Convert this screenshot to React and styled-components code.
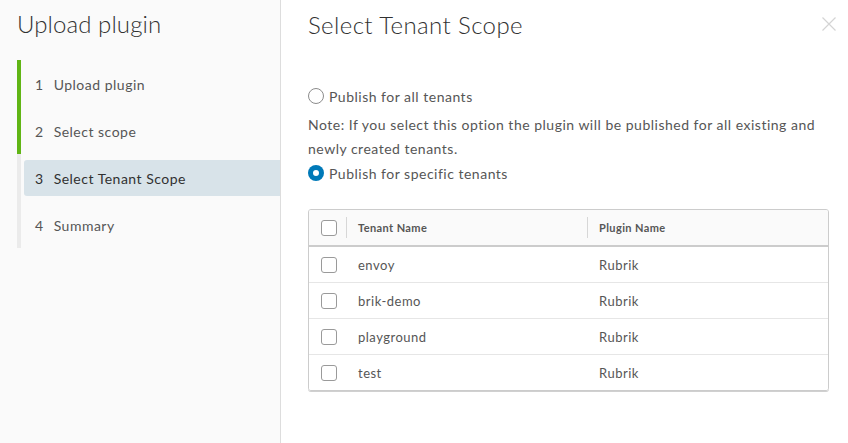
import React from 'react'
import styled, { createGlobalStyle } from 'styled-components'

const GlobalStyle = createGlobalStyle`
  html, body, #root {
    margin: 0;
    padding: 0;
    height: 100%;
  }
  body {
    background: #fff;
    font-family: 'Lato', 'Open Sans', sans-serif;
    color: #565656;
  }
  * { box-sizing: border-box; }
`

const Wizard = styled.div`
  display: flex;
  height: 443px;
  width: 848px;
  overflow: hidden;
`

const Sidebar = styled.aside`
  width: 281px;
  flex-shrink: 0;
  background: #fafafa;
  border-right: 1px solid #dddddd;
  padding-left: 17px;
`

const SideTitle = styled.h1`
  margin: 0;
  height: 60px;
  line-height: 48px;
  font-size: 24px;
  font-weight: 300;
  color: #313131;
  letter-spacing: 0.1px;
`

const StepList = styled.div`
  display: flex;
  flex-direction: column;
`

const StepRow = styled.div`
  height: 47px;
  padding: 6px 0 5px 3px;
  border-left: 4px solid ${p => (p.$done ? '#60b515' : '#ebebeb')};
`

const StepItem = styled.div`
  height: 36px;
  display: flex;
  align-items: center;
  padding-left: 11px;
  font-size: 14px;
  letter-spacing: 0.5px;
  color: ${p => (p.$active ? '#313131' : '#565656')};
  background: ${p => (p.$active ? '#d8e3e9' : 'transparent')};
  border-radius: 3px 0 0 3px;
`

const StepNum = styled.span`
  margin-right: 10px;
`

const Main = styled.main`
  flex: 1;
  padding: 0 11px 0 27px;
  display: flex;
  flex-direction: column;
`

const Header = styled.div`
  height: 48px;
  display: flex;
  align-items: center;
  justify-content: space-between;
  margin-bottom: 36px;
`

const Title = styled.h2`
  margin: 0;
  font-size: 24px;
  font-weight: 300;
  color: #313131;
  letter-spacing: 0.4px;
`

const CloseButton = styled.button`
  border: none;
  background: none;
  padding: 0;
  width: 16px;
  height: 16px;
  cursor: pointer;
  display: flex;
`

const RadioRow = styled.label`
  display: flex;
  align-items: center;
  gap: 5px;
  height: 24px;
  font-size: 14px;
  letter-spacing: 0.5px;
  color: #565656;
`

const Radio = styled.span`
  width: 16px;
  height: 16px;
  border-radius: 50%;
  flex-shrink: 0;
  background: #fff;
  border: ${p => (p.$checked ? 'none' : '1px solid #8c8c8c')};
  box-shadow: ${p => (p.$checked ? 'inset 0 0 0 5px #0079b8' : 'none')};
`

const Note = styled.p`
  margin: 5px 0 0;
  font-size: 14px;
  line-height: 24px;
  letter-spacing: 0.5px;
  color: #565656;
  max-width: 515px;
`

const Table = styled.div`
  margin-top: 24px;
  width: 521px;
  border: 1px solid #cccccc;
  border-radius: 3px;
  box-shadow: 0 1px 0 #d0d0d0;
  overflow: hidden;
`

const Row = styled.div`
  display: grid;
  grid-template-columns: 37px 241px 1fr;
  align-items: center;
  height: ${p => (p.$head ? '37px' : '36px')};
  background: ${p => (p.$head ? '#fafafa' : '#fff')};
  border-bottom: ${p => (p.$head ? '2px solid #cccccc' : '1px solid #e6e6e6')};
  &:last-child {
    border-bottom: none;
    height: 35px;
  }
`

const Cell = styled.div`
  height: 100%;
  display: flex;
  align-items: center;
  padding-left: 12px;
  font-size: ${p => (p.$head ? '11px' : '13px')};
  font-weight: ${p => (p.$head ? 700 : 400)};
  color: #565656;
  letter-spacing: ${p => (p.$head ? '0.4px' : '0.5px')};
  position: relative;
  ${p =>
    p.$sep &&
    `&::before {
      content: '';
      position: absolute;
      left: 0;
      top: 7px;
      bottom: 7px;
      border-left: 1px solid #d7d7d7;
    }`}
`

const Checkbox = styled.span`
  width: 16px;
  height: 16px;
  border: 1px solid #9a9a9a;
  border-radius: 3px;
  background: #fff;
`

const steps = [
  { label: 'Upload plugin', done: true },
  { label: 'Select scope', done: true },
  { label: 'Select Tenant Scope', active: true },
  { label: 'Summary' },
]

const tenants = ['envoy', 'brik-demo', 'playground', 'test']

export default function App() {
  return (
    <>
      <GlobalStyle />
      <Wizard>
        <Sidebar>
          <SideTitle>Upload plugin</SideTitle>
          <StepList>
            {steps.map((s, i) => (
              <StepRow key={s.label} $done={s.done}>
                <StepItem $active={s.active}>
                  <StepNum>{i + 1}</StepNum>
                  {s.label}
                </StepItem>
              </StepRow>
            ))}
          </StepList>
        </Sidebar>
        <Main>
          <Header>
            <Title>Select Tenant Scope</Title>
            <CloseButton aria-label="Close">
              <svg width="16" height="16" viewBox="0 0 16 16">
                <path d="M1.5 1.5 L14.5 14.5 M14.5 1.5 L1.5 14.5" stroke="#d4d4d4" strokeWidth="1.2" />
              </svg>
            </CloseButton>
          </Header>
          <RadioRow>
            <Radio />
            Publish for all tenants
          </RadioRow>
          <Note>
            Note: If you select this option the plugin will be published for all existing and newly created tenants.
          </Note>
          <RadioRow>
            <Radio $checked />
            Publish for specific tenants
          </RadioRow>
          <Table>
            <Row $head>
              <Cell $head><Checkbox /></Cell>
              <Cell $head $sep>Tenant Name</Cell>
              <Cell $head $sep>Plugin Name</Cell>
            </Row>
            {tenants.map(t => (
              <Row key={t}>
                <Cell><Checkbox /></Cell>
                <Cell>{t}</Cell>
                <Cell>Rubrik</Cell>
              </Row>
            ))}
          </Table>
        </Main>
      </Wizard>
    </>
  )
}
